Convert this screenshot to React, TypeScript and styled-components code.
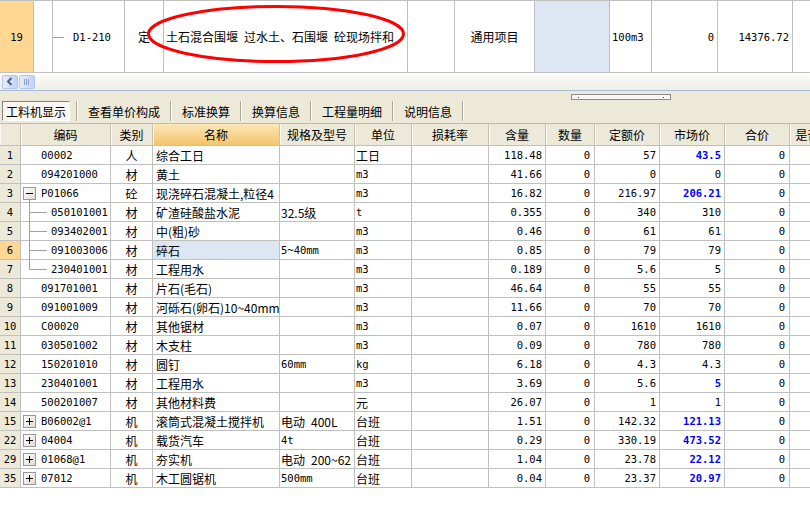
import React from 'react'
import styled, { createGlobalStyle, css } from 'styled-components'

const cjk = `"Noto Sans CJK SC", "Liberation Sans", sans-serif`
const mono = `"DejaVu Sans Mono", "Noto Sans CJK SC", monospace`

const gridLine = '#c0c0c0'
const beige = '#ece9d8'
const orange = '#ffd792'
const pickBlue = '#dde7f4'

const GlobalStyle = createGlobalStyle`
  html, body {
    margin: 0;
    padding: 0;
    background: #fff;
  }
  body {
    font-family: ${cjk};
    font-size: 12px;
    color: #000;
  }
  * {
    box-sizing: border-box;
  }
`

const Page = styled.div`
  width: 810px;
  height: 523px;
  overflow: hidden;
  background: #fff;
  display: flex;
  flex-direction: column;
`

// upper grid: only one row visible
const topCols = '34px 19px 72px 39px 244px 47px 80px 75px 42px 66px 75px 60px'

const TopRow = styled.div`
  position: relative;
  flex: none;
  display: grid;
  grid-template-columns: ${topCols};
  height: 73px;
  border-top: 1px solid ${gridLine};
  border-bottom: 1px solid ${gridLine};
`

const Ring = styled.svg`
  position: absolute;
  left: 0;
  top: -1px;
  pointer-events: none;
`

type Align = 'left' | 'center' | 'right'

const Cell = styled.div<{ $align?: Align; $mono?: boolean; $bg?: string; $strong?: boolean; $pad?: number }>`
  min-width: 0;
  display: flex;
  align-items: center;
  justify-content: ${p => (p.$align === 'right' ? 'flex-end' : p.$align === 'center' ? 'center' : 'flex-start')};
  padding: 0 ${p => p.$pad ?? 3}px;
  border-right: 1px solid ${gridLine};
  background: ${p => p.$bg ?? 'transparent'};
  font-family: ${p => (p.$mono ? mono : cjk)};
  font-size: ${p => (p.$mono ? '10.5px' : '12px')};
  white-space: nowrap;
  overflow: hidden;
  ${p =>
    p.$strong &&
    css`
      color: #0000ff;
      font-weight: bold;
    `}
`

const CodeCell = styled.div<{ $indent: number }>`
  display: flex;
  align-items: center;
  padding-left: ${p => p.$indent}px;
  border-right: 1px solid ${gridLine};
  font-family: ${mono};
  font-size: 10.5px;
  white-space: nowrap;
`

const Glyph = styled.svg`
  flex: none;
  overflow: visible;
  display: block;
`

const HScroll = styled.div`
  flex: none;
  height: 17px;
  display: flex;
  align-items: center;
  gap: 1px;
  padding-left: 2px;
  background: linear-gradient(#fdfdfb, #eeede6);
`

const ScrollButton = styled.div`
  width: 16px;
  height: 14px;
  border: 1px solid #b3c6f3;
  border-radius: 2px;
  background: linear-gradient(to right, #e6edfd, #c2d2f8);
  display: flex;
  align-items: center;
  justify-content: center;
`

const TabArea = styled.div`
  flex: none;
  height: 34px;
  background: ${beige};
  border-top: 1px solid #a9bdd9;
  border-bottom: 1px solid #a9bdd9;
  display: flex;
  flex-direction: column;
`

const SplitGrip = styled.div`
  margin: 3px 0 0 571px;
  width: 100px;
  height: 6px;
  padding: 0 6px;
  border: 1px solid #8c8c8c;
  background: #f8f7f3;
  display: flex;
  align-items: center;
  justify-content: space-between;
`

const GripDot = styled.span`
  width: 1px;
  height: 1px;
  background: #1c3f90;
`

const TabStrip = styled.div`
  margin-top: 1px;
  height: 20px;
  display: flex;
  align-items: stretch;
  padding-left: 2px;
`

const Tab = styled.div<{ $pressed?: boolean }>`
  display: flex;
  align-items: center;
  padding: 0 10px;
  font-family: ${cjk};
  font-size: 12px;
  white-space: nowrap;
  ${p =>
    p.$pressed &&
    css`
      padding: 0 3px;
      margin-right: 6px;
      border: 1px solid;
      border-color: #808080 #fff #fff #808080;
      background: #f8f7f3;
    `}
`

const TabSep = styled.div`
  width: 2px;
  border-left: 1px solid #aca899;
  border-right: 1px solid #fff;
`

const gridCols = '21px 90px 42px 127px 75px 57px 77px 57px 49px 65px 65px 65px 60px'

const HeadRow = styled.div`
  flex: none;
  display: grid;
  grid-template-columns: ${gridCols};
  height: 22px;
  background: ${beige};
  border-bottom: 1px solid ${gridLine};
`

const HeadCell = styled.div<{ $active?: boolean }>`
  display: flex;
  align-items: center;
  justify-content: center;
  border-right: 1px solid #c5c2b3;
  box-shadow: inset 1px 0 0 #fbfaf6;
  font-family: ${cjk};
  font-size: 12px;
  white-space: nowrap;
  overflow: hidden;
  ${p =>
    p.$active &&
    css`
      background: linear-gradient(#fce7b8, #f3c46c);
    `}
`

const DataRow = styled.div`
  flex: none;
  display: grid;
  grid-template-columns: ${gridCols};
  height: 19px;
  border-bottom: 1px solid ${gridLine};
`

type Kind = 'plain' | 'open' | 'closed' | 'child' | 'last'

interface Item {
  no: string
  code: string
  kind: Kind
  type: string
  name: string
  spec?: string
  unit: string
  qty: string
  quota: string
  market: string
  blue?: boolean
  selected?: boolean
}

// \u2002 keeps the wide blank the old grid font gives between words
const items: Item[] = [
  { no: '1', code: '00002', kind: 'plain', type: '人', name: '综合工日', unit: '工日', qty: '118.48', quota: '57', market: '43.5', blue: true },
  { no: '2', code: '094201000', kind: 'plain', type: '材', name: '黄土', unit: 'm3', qty: '41.66', quota: '0', market: '0' },
  { no: '3', code: 'P01066', kind: 'open', type: '砼', name: '现浇碎石混凝土,粒径4', unit: 'm3', qty: '16.82', quota: '216.97', market: '206.21', blue: true },
  { no: '4', code: '050101001', kind: 'child', type: '材', name: '矿渣硅酸盐水泥', spec: '32.5级', unit: 't', qty: '0.355', quota: '340', market: '310' },
  { no: '5', code: '093402001', kind: 'child', type: '材', name: '中(粗)砂', unit: 'm3', qty: '0.46', quota: '61', market: '61' },
  { no: '6', code: '091003006', kind: 'child', type: '材', name: '碎石', spec: '5~40mm', unit: 'm3', qty: '0.85', quota: '79', market: '79', selected: true },
  { no: '7', code: '230401001', kind: 'last', type: '材', name: '工程用水', unit: 'm3', qty: '0.189', quota: '5.6', market: '5' },
  { no: '8', code: '091701001', kind: 'plain', type: '材', name: '片石(毛石)', unit: 'm3', qty: '46.64', quota: '55', market: '55' },
  { no: '9', code: '091001009', kind: 'plain', type: '材', name: '河砾石(卵石)10~40mm', unit: 'm3', qty: '11.66', quota: '70', market: '70' },
  { no: '10', code: 'C00020', kind: 'plain', type: '材', name: '其他锯材', unit: 'm3', qty: '0.07', quota: '1610', market: '1610' },
  { no: '11', code: '030501002', kind: 'plain', type: '材', name: '木支柱', unit: 'm3', qty: '0.09', quota: '780', market: '780' },
  { no: '12', code: '150201010', kind: 'plain', type: '材', name: '圆钉', spec: '60mm', unit: 'kg', qty: '6.18', quota: '4.3', market: '4.3' },
  { no: '13', code: '230401001', kind: 'plain', type: '材', name: '工程用水', unit: 'm3', qty: '3.69', quota: '5.6', market: '5', blue: true },
  { no: '14', code: '500201007', kind: 'plain', type: '材', name: '其他材料费', unit: '元', qty: '26.07', quota: '1', market: '1' },
  { no: '15', code: 'B06002@1', kind: 'closed', type: '机', name: '滚筒式混凝土搅拌机', spec: '电动\u2002400L', unit: '台班', qty: '1.51', quota: '142.32', market: '121.13', blue: true },
  { no: '22', code: '04004', kind: 'closed', type: '机', name: '载货汽车', spec: '4t', unit: '台班', qty: '0.29', quota: '330.19', market: '473.52', blue: true },
  { no: '29', code: '01068@1', kind: 'closed', type: '机', name: '夯实机', spec: '电动\u2002200~62', unit: '台班', qty: '1.04', quota: '23.78', market: '22.12', blue: true },
  { no: '35', code: '07012', kind: 'closed', type: '机', name: '木工圆锯机', spec: '500mm', unit: '台班', qty: '0.04', quota: '23.37', market: '20.97', blue: true },
]

const heads = ['', '编码', '类别', '名称', '规格及型号', '单位', '损耗率', '含量', '数量', '定额价', '市场价', '合价', '是否暂估']
const tabs = ['工料机显示', '查看单价构成', '标准换算', '换算信息', '工程量明细', '说明信息']

const isAscii = (s: string) => /^[\x20-\x7e]*$/.test(s)

const Expander = ({ open }: { open: boolean }) => (
  <Glyph width="14" height="18" viewBox="0 0 14 18" style={{ marginLeft: 2, marginRight: 4 }}>
    <defs>
      <linearGradient id="expFill" x1="0" y1="0" x2="1" y2="1">
        <stop offset="0" stopColor="#ffffff" />
        <stop offset="1" stopColor="#dedbd0" />
      </linearGradient>
    </defs>
    <rect x="0.5" y="3.5" width="12" height="12" fill="url(#expFill)" stroke="#989898" />
    <path d="M3 9.5h7" stroke="#000" />
    {!open && <path d="M6.5 6v7" stroke="#000" />}
    {open && <path d="M6.5 16v3" stroke="#a0a0a0" />}
  </Glyph>
)

const Branch = ({ last }: { last: boolean }) => (
  <Glyph width="30" height="18" viewBox="0 0 30 18">
    <path d={last ? 'M8.5 0v9.5H26' : 'M8.5 0v19M8.5 9.5H26'} stroke="#a0a0a0" fill="none" />
  </Glyph>
)

const Code = ({ item }: { item: Item }) => {
  if (item.kind === 'plain') return <CodeCell $indent={20}>{item.code}</CodeCell>
  if (item.kind === 'child' || item.kind === 'last')
    return (
      <CodeCell $indent={0}>
        <Branch last={item.kind === 'last'} />
        {item.code}
      </CodeCell>
    )
  return (
    <CodeCell $indent={0}>
      <Expander open={item.kind === 'open'} />
      {item.code}
    </CodeCell>
  )
}

const Text = ({ value, align = 'left', pad, bg }: { value?: string; align?: Align; pad?: number; bg?: string }) => (
  <Cell $align={align} $mono={!!value && isAscii(value)} $pad={pad} $bg={bg}>
    {value}
  </Cell>
)

export default function App() {
  return (
    <Page>
      <GlobalStyle />
      <TopRow>
        <Cell $align="center" $mono $bg={orange}>19</Cell>
        <Cell />
        <CodeCell $indent={0}>
          <Glyph width="12" height="18" viewBox="0 0 12 18" style={{ marginRight: 8 }}>
            <path d="M0 9.5h11" stroke="#a0a0a0" />
          </Glyph>
          D1-210
        </CodeCell>
        <Text value="定" align="center" />
        <Text value={'土石混合围堰\u2002过水土、石围堰\u2002砼现场拌和'} pad={2} />
        <Cell />
        <Text value="通用项目" align="center" />
        <Cell $bg={pickBlue} />
        <Text value="100m3" pad={2} />
        <Text value="0" align="right" />
        <Text value="14376.72" align="right" />
        <Cell />
        <Ring width="810" height="73" viewBox="0 0 810 73">
          <ellipse cx="276" cy="34" rx="127.5" ry="27.5" fill="none" stroke="#ff0000" strokeWidth="3" />
        </Ring>
      </TopRow>

      <HScroll>
        <ScrollButton>
          <svg width="8" height="9" viewBox="0 0 8 9">
            <path d="M5.5 1L2 4.5 5.5 8" stroke="#4d6185" strokeWidth="2" fill="none" />
          </svg>
        </ScrollButton>
        <ScrollButton>
          <svg width="8" height="8" viewBox="0 0 8 8">
            <path d="M1.5 1v6M3.5 1v6M5.5 1v6" stroke="#8aa2d6" fill="none" />
          </svg>
        </ScrollButton>
      </HScroll>

      <TabArea>
        <SplitGrip>
          <GripDot />
          <GripDot />
        </SplitGrip>
        <TabStrip>
          {tabs.map((t, i) => (
            <React.Fragment key={t}>
              <Tab $pressed={i === 0}>{t}</Tab>
              <TabSep />
            </React.Fragment>
          ))}
        </TabStrip>
      </TabArea>

      <HeadRow>
        {heads.map((h, i) => (
          <HeadCell key={i} $active={h === '名称'}>
            {h}
          </HeadCell>
        ))}
      </HeadRow>

      {items.map(item => (
        <DataRow key={item.no}>
          <Cell $align="center" $mono $bg={item.selected ? orange : beige}>
            {item.no}
          </Cell>
          <Code item={item} />
          <Text value={item.type} align="center" />
          <Text value={item.name} bg={item.selected ? pickBlue : undefined} />
          <Text value={item.spec} pad={1} />
          <Text value={item.unit} pad={1} />
          <Cell />
          <Text value={item.qty} align="right" />
          <Text value="0" align="right" pad={4} />
          <Text value={item.quota} align="right" />
          <Cell $align="right" $mono $strong={item.blue}>
            {item.market}
          </Cell>
          <Text value="0" align="right" pad={4} />
          <Cell />
        </DataRow>
      ))}
    </Page>
  )
}
